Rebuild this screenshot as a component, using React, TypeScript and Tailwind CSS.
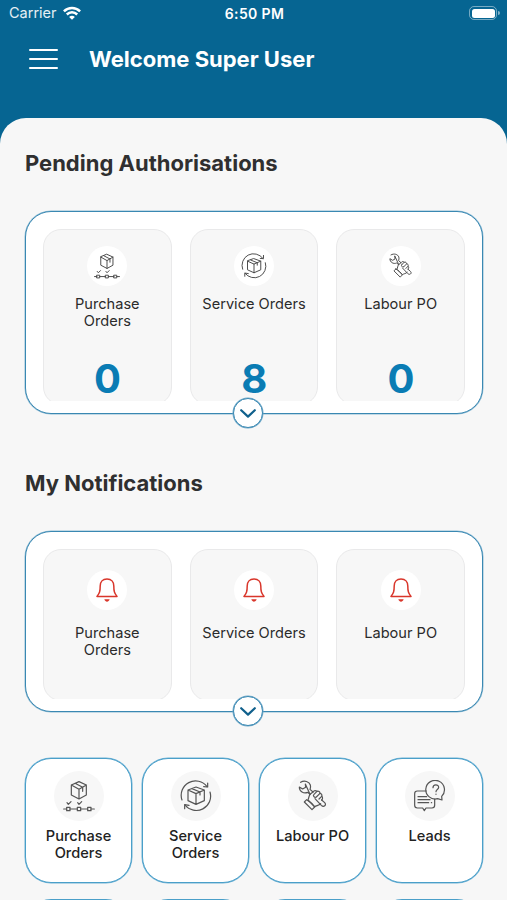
import type { ReactNode } from "react";
import clsx from "clsx";

interface IconProps {
  className?: string;
}

function LineIcon({ className, children }: IconProps & { children: ReactNode }) {
  return (
    <svg
      viewBox="0 0 96 96"
      fill="none"
      stroke="currentColor"
      strokeWidth="3.6"
      strokeLinecap="round"
      strokeLinejoin="round"
      className={className}
    >
      {children}
    </svg>
  );
}

function PurchaseIcon({ className }: IconProps) {
  return (
    <LineIcon className={className}>
      <path d="M48 5 70 15V45L48 57 25 45V15ZM25 15 48 28 70 15M48 28V57M36 10 59 22V34" />
      <path d="M12 68 16 73 24 65M44 68 48 73 56 65" />
      <path d="M2 87H11M21 87H43M53 87H74M84 87H94" />
      <path d="M11 82H21V92H11ZM43 82H53V92H43ZM74 82H84V92H74Z" />
    </LineIcon>
  );
}

function ServiceIcon({ className }: IconProps) {
  return (
    <LineIcon className={className}>
      <path d="M48 21 73 30V62L48 73 24 62V30ZM24 30 48 41 73 30M48 41V73M36 26 60 36V45" />
      <path d="M6 60A43 43 0 0 1 81 20M90 36A43 43 0 0 1 15 75" />
      <path d="M83 9V21L71 20M27 76 14 74V86" />
    </LineIcon>
  );
}

function LabourIcon({ className }: IconProps) {
  return (
    <LineIcon className={className}>
      <path d="M11 7C22 0 37 5 40 15C41 20 41 24 39 28L48 36M39 43 32 37C20 42 7 34 7 21L17 27 26 22 25 12Z" />
      <path d="M39 43C35 49 36 54 33 60L53 80C59 76 65 77 71 71" />
      <path d="M29 59 22 66 45 89 53 81C47 72 38 64 29 59Z" />
      <path d="M39 43 48 36C52 30 56 31 60 34C65 32 69 36 69 40C74 41 76 45 74 49C78 52 77 57 74 60" />
      <path d="M60 34 51 43M69 40 58 51M74 49 66 57M51 43C46 48 53 54 58 51" />
      <path d="M54 56 73 76C80 83 90 75 83 68L74 60" />
    </LineIcon>
  );
}

function LeadsIcon({ className }: IconProps) {
  return (
    <LineIcon className={className}>
      <path d="M37 33H10Q2 33 2 41V76Q2 84 10 84H26L31 92 36 84H54Q62 84 62 76V57" />
      <path d="M83 49A28 28 0 1 0 71 56L84 60Z" />
      <path d="M12 50H38M12 59H48M12 68H44M52 68H53" />
      <path d="M57 23C57 12 74 12 74 22 74 29 66 28 66 35M66 42V43" />
    </LineIcon>
  );
}

function BellIcon() {
  return (
    <svg viewBox="0 0 22 24" className="h-6 w-[22px]" fill="none" stroke="#d9362b" strokeWidth="1.5" strokeLinejoin="round">
      <path d="M11 1C6.6 1 4.2 4 4.2 8C4.2 13.5 3.6 15 1 18.4H21C18.4 15 17.8 13.5 17.8 8C17.8 4 15.4 1 11 1Z" />
      <path d="M8.3 21.3C9.3 24.4 12.7 24.4 13.7 21.3Z" fill="#d9362b" stroke="none" />
    </svg>
  );
}

function WifiIcon() {
  return (
    <svg viewBox="0 0 18 14" className="h-3.5 w-[18px]" fill="none" stroke="white" strokeWidth="2.5">
      <path d="M.9 5.3C5.5 .8 12.5 .8 17.1 5.3M3.8 8.5C6.8 5.6 11.2 5.6 14.2 8.5" />
      <path d="M9 13.8 6.1 10.9C7.8 9.4 10.2 9.4 11.9 10.9Z" fill="white" stroke="none" />
    </svg>
  );
}

function StatusBar() {
  return (
    <div className="grid h-[27px] grid-cols-3 items-center pl-[9px] pr-[7px] text-white">
      <div className="-mt-px flex items-center gap-1.5">
        <span className="text-[14.5px] text-white/90">Carrier</span>
        <WifiIcon />
      </div>
      <span className="text-center text-[14px] font-semibold tracking-[0.35px]">6:50 PM</span>
      <div className="-mt-px flex items-center justify-end gap-px">
        <div className="h-[14px] w-7 rounded-[5px] border border-white/45 p-[1.5px]">
          <div className="h-full rounded-[2.5px] bg-white" />
        </div>
        <div className="h-1 w-[2px] rounded-r bg-white/50" />
      </div>
    </div>
  );
}

interface Entry {
  label: string;
  icon: (props: IconProps) => ReactNode;
  count?: number;
}

const orders: Entry[] = [
  { label: "Purchase Orders", icon: PurchaseIcon, count: 0 },
  { label: "Service Orders", icon: ServiceIcon, count: 8 },
  { label: "Labour PO", icon: LabourIcon, count: 0 },
];

const shortcuts: Entry[] = [...orders, { label: "Leads", icon: LeadsIcon }];

function Panel({ className, children }: { className: string; children: ReactNode }) {
  return (
    <div
      className={clsx(
        "relative rounded-[26px] border border-[#3a88b2] bg-white px-[17px] pt-[17px] shadow-[0_0_0_0.5px_#8dbbd4]",
        className,
      )}
    >
      <div className="grid h-full grid-cols-3 gap-[18px] overflow-hidden">{children}</div>
      <button className="absolute -bottom-[15px] left-[207px] flex size-[30px] items-center justify-center rounded-full border border-[#3a88b2] bg-white shadow-[0_0_0_0.5px_#6aa6c7]">
        <svg viewBox="0 0 16 9" className="h-[9px] w-4" fill="none" stroke="#10608c" strokeWidth="2.2" strokeLinecap="round" strokeLinejoin="round">
          <path d="M1.2 1.2 8 7.6 14.8 1.2" />
        </svg>
      </button>
    </div>
  );
}

function AuthorisationCard({ label, icon: Icon, count }: Entry) {
  return (
    <div className="flex h-[176px] flex-col items-center rounded-[18px] border-[1.5px] border-[#e9e9ea] bg-[#f7f7f7] pt-[16px]">
      <div className="flex size-10 items-center justify-center rounded-full bg-white">
        <Icon className="size-[26px] text-[#4a4a4a]" />
      </div>
      <div className="mt-[10px] h-[51px] w-[110px] text-center text-[14.6px] leading-[17px] text-[#2b2b2b]">{label}</div>
      <div className="mt-[12px] text-[40px] font-bold leading-10 tracking-[-0.5px] text-[#0a7cb4]">{count}</div>
    </div>
  );
}

function NotificationCard({ label }: { label: string }) {
  return (
    <div className="flex h-[152px] flex-col items-center rounded-[18px] border-[1.5px] border-[#e9e9ea] bg-[#f7f7f7] pt-5">
      <div className="flex size-10 items-center justify-center rounded-full bg-white">
        <BellIcon />
      </div>
      <div className="mt-[15px] w-[110px] text-center text-[14.6px] leading-[17px] text-[#2b2b2b]">{label}</div>
    </div>
  );
}

function Shortcut({ label, icon: Icon }: Entry) {
  return (
    <div className="flex h-[125px] flex-col items-center rounded-[26px] border-[1.5px] border-[#4a9fc9] bg-white pt-3 shadow-[0_0_0_0.5px_#6fb3d6]">
      <div className="flex size-[50px] items-center justify-center rounded-full bg-[#f7f7f7]">
        <Icon className="size-8 text-[#555]" />
      </div>
      <div className="mt-[7px] w-[90px] text-center text-[14.6px] font-medium leading-[17px] text-[#222]">{label}</div>
    </div>
  );
}

export default function App() {
  return (
    <div className="h-[900px] w-[507px] overflow-hidden bg-[#066592] font-['Inter',sans-serif]">
      <StatusBar />
      <header className="flex h-[91px] items-start pl-[29px] pt-[18px]">
        <button className="mt-[4px] flex w-[29px] flex-col gap-[7px]">
          <span className="h-[2px] rounded bg-white" />
          <span className="h-[2px] rounded bg-white" />
          <span className="h-[2px] rounded bg-white" />
        </button>
        <h1 className="ml-[31px] text-[22px] font-bold leading-7 text-white">Welcome Super User</h1>
      </header>
      <main className="h-[782px] rounded-t-[26px] bg-[#f7f7f7] pl-[25px] pr-6 pt-[31px]">
        <h2 className="text-[22px] font-bold leading-7 text-[#2f2f30]">Pending Authorisations</h2>
        <Panel className="mt-[34px] h-[203px] pb-3">
          {orders.map((entry) => (
            <AuthorisationCard key={entry.label} {...entry} />
          ))}
        </Panel>
        <h2 className="mt-[55px] text-[22px] font-bold leading-7 text-[#2f2f30]">My Notifications</h2>
        <Panel className="mt-[34px] h-[181px] pb-3">
          {orders.map((entry) => (
            <NotificationCard key={entry.label} label={entry.label} />
          ))}
        </Panel>
        <div className="mt-[46px] grid grid-cols-4 gap-x-[10px] gap-y-4">
          {shortcuts.map((entry) => (
            <Shortcut key={entry.label} {...entry} />
          ))}
          {/* next row, only its top edge is above the fold */}
          {shortcuts.map((entry) => (
            <div key={entry.label} className="h-[125px] rounded-[26px] border-[1.5px] border-[#4a9fc9] bg-white" />
          ))}
        </div>
      </main>
    </div>
  );
}
